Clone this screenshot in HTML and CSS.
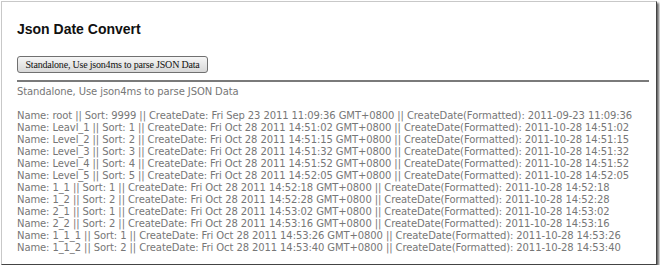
FILE: index.html
```html
<!DOCTYPE html>
<html lang="en">
<head>
    <meta charset="UTF-8">
    <link rel="stylesheet" href="styles.css">
    <title>Json Date Convert</title>
</head>
<body>
    <div class="frame">
        <h1 class="title">Json Date Convert</h1>

        <button class="parse-button">Standalone, Use json4ms to parse JSON Data</button>

        <hr class="divider">

        <div class="caption">Standalone, Use json4ms to parse JSON Data</div>

        <div class="results">
            <div>Name: root || Sort: 9999 || CreateDate: Fri Sep 23 2011 11:09:36 GMT+0800 || CreateDate(Formatted): 2011-09-23 11:09:36</div>
            <div>Name: Leavl_1 || Sort: 1 || CreateDate: Fri Oct 28 2011 14:51:02 GMT+0800 || CreateDate(Formatted): 2011-10-28 14:51:02</div>
            <div>Name: Level_2 || Sort: 2 || CreateDate: Fri Oct 28 2011 14:51:15 GMT+0800 || CreateDate(Formatted): 2011-10-28 14:51:15</div>
            <div>Name: Level_3 || Sort: 3 || CreateDate: Fri Oct 28 2011 14:51:32 GMT+0800 || CreateDate(Formatted): 2011-10-28 14:51:32</div>
            <div>Name: Level_4 || Sort: 4 || CreateDate: Fri Oct 28 2011 14:51:52 GMT+0800 || CreateDate(Formatted): 2011-10-28 14:51:52</div>
            <div>Name: Level_5 || Sort: 5 || CreateDate: Fri Oct 28 2011 14:52:05 GMT+0800 || CreateDate(Formatted): 2011-10-28 14:52:05</div>
            <div>Name: 1_1 || Sort: 1 || CreateDate: Fri Oct 28 2011 14:52:18 GMT+0800 || CreateDate(Formatted): 2011-10-28 14:52:18</div>
            <div>Name: 1_2 || Sort: 2 || CreateDate: Fri Oct 28 2011 14:52:28 GMT+0800 || CreateDate(Formatted): 2011-10-28 14:52:28</div>
            <div>Name: 2_1 || Sort: 1 || CreateDate: Fri Oct 28 2011 14:53:02 GMT+0800 || CreateDate(Formatted): 2011-10-28 14:53:02</div>
            <div>Name: 2_2 || Sort: 2 || CreateDate: Fri Oct 28 2011 14:53:16 GMT+0800 || CreateDate(Formatted): 2011-10-28 14:53:16</div>
            <div>Name: 1_1_1 || Sort: 1 || CreateDate: Fri Oct 28 2011 14:53:26 GMT+0800 || CreateDate(Formatted): 2011-10-28 14:53:26</div>
            <div>Name: 1_1_2 || Sort: 2 || CreateDate: Fri Oct 28 2011 14:53:40 GMT+0800 || CreateDate(Formatted): 2011-10-28 14:53:40</div>
        </div>
    </div>
</body>
</html>
```

FILE: styles.css
```css
body {
    margin: 0;
    background-color: #ffffff;
}

.frame {
    box-sizing: border-box;
    width: 656px;
    height: 264px;
    margin: 1px 0 0 1px;
    padding: 0 0 0 15px;
    border-top: 1px solid #c8c8c8;
    border-left: 1px solid #c8c8c8;
    border-right: 1px solid #444444;
    border-bottom: 1px solid #444444;
    box-shadow: 2px 2px 2px rgba(0, 0, 0, 0.6);
    overflow: hidden;
}

.title {
    margin: 18px 0 0 0;
    font-family: "Liberation Sans", Arial, sans-serif;
    font-size: 14px;
    font-weight: bold;
    line-height: 18px;
    color: #111111;
}

.parse-button {
    display: block;
    margin-top: 18px;
    width: 191px;
    height: 17px;
    padding: 0;
    font-family: "Liberation Serif", "Times New Roman", serif;
    font-size: 10px;
    letter-spacing: -0.2px;
    color: #111111;
    background: linear-gradient(#f6f6f6, #d8d8d8);
    border: 1px solid #707070;
    border-radius: 3px;
}

.divider {
    margin: 7px 7px 0 0;
    height: 0;
    border: none;
    border-top: 2px solid #7a7a7a;
}

.caption {
    margin-top: 4px;
    font-family: "DejaVu Sans", Verdana, sans-serif;
    font-size: 10px;
    letter-spacing: -0.1px;
    line-height: 12px;
    color: #777777;
}

.results {
    margin-top: 12px;
    font-family: "DejaVu Sans", Verdana, sans-serif;
    font-size: 10px;
    letter-spacing: -0.1px;
    line-height: 12px;
    color: #777777;
    white-space: nowrap;
}
```
